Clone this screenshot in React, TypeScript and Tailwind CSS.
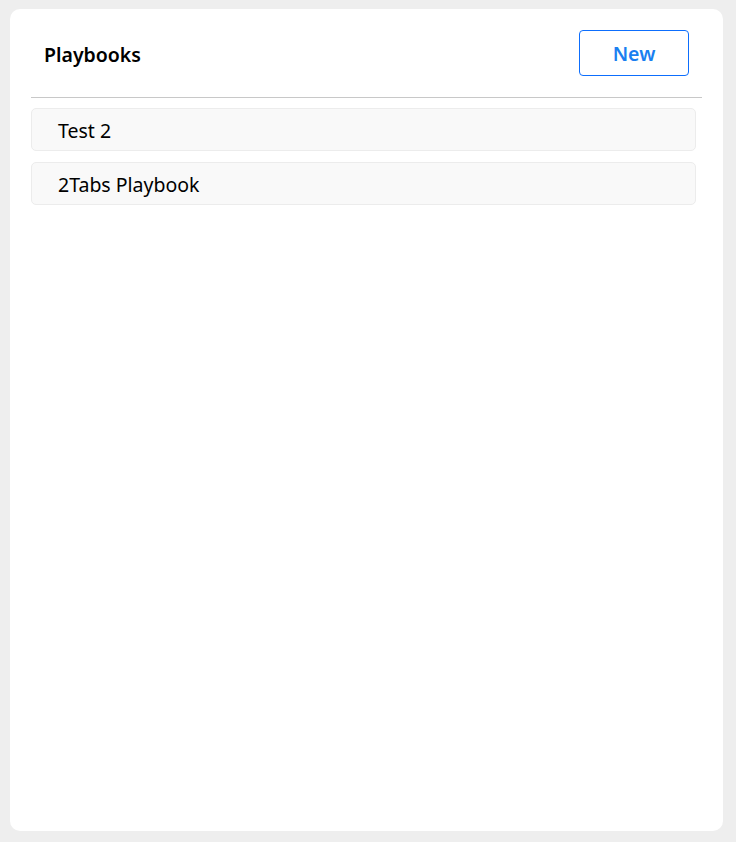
export default function App() {
  const playbooks = ['Test 2', '2Tabs Playbook']

  return (
    <div className="min-h-screen bg-[#eeeeee] pl-[10px] pr-[13px] pt-[9px] pb-[11px]" style={{ fontFamily: '"Segoe UI", "Noto Sans", sans-serif' }}>
      <div className="h-[822px] rounded-[10px] bg-white px-[21px]">
        <div className="flex h-[89px] items-center justify-between border-b border-[#c8c8c8] px-[13px]">
          <h1 className="mt-[4px] text-[19.5px] font-semibold leading-none text-black">Playbooks</h1>
          <button className="h-[46px] w-[110px] rounded-[4px] border border-[#0d6efd] bg-white pt-[2px] text-[19.5px] font-semibold text-[#1a7ff0]">
            New
          </button>
        </div>
        <ul className="mr-[6px] mt-[10px] flex flex-col gap-[11px]">
          {playbooks.map((p) => (
            <li key={p} className="flex h-[43px] items-center rounded-[5px] border border-[#ececec] bg-[#f9f9f9] pl-[26px] pt-[3px] text-[19.5px] text-black">
              {p}
            </li>
          ))}
        </ul>
      </div>
    </div>
  )
}
